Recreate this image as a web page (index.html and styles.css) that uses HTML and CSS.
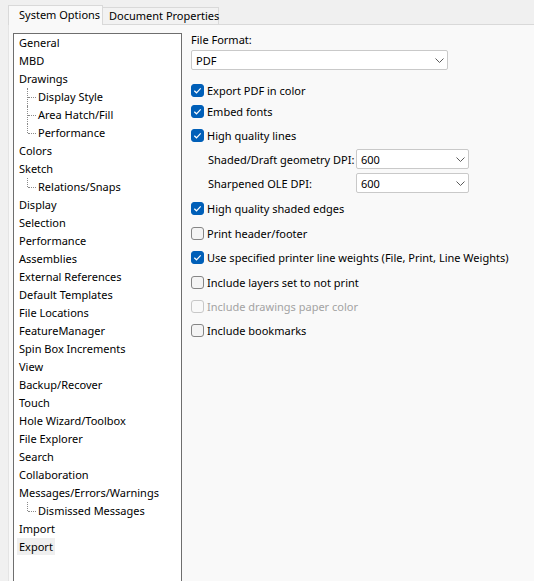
FILE: index.html
```html
<!DOCTYPE html>
<html>
<head>
<meta charset="utf-8">
<link rel="stylesheet" href="styles.css">
</head>
<body>
<div class="tabs">
  <div class="tab active">System Options</div>
  <div class="tab">Document Properties</div>
</div>
<div class="panel">
  <ul class="tree">
    <li>General</li>
    <li>MBD</li>
    <li>Drawings</li>
    <li class="child">Display Style</li>
    <li class="child">Area Hatch/Fill</li>
    <li class="child last">Performance</li>
    <li>Colors</li>
    <li>Sketch</li>
    <li class="child last">Relations/Snaps</li>
    <li>Display</li>
    <li>Selection</li>
    <li>Performance</li>
    <li>Assemblies</li>
    <li>External References</li>
    <li>Default Templates</li>
    <li>File Locations</li>
    <li>FeatureManager</li>
    <li>Spin Box Increments</li>
    <li>View</li>
    <li>Backup/Recover</li>
    <li>Touch</li>
    <li>Hole Wizard/Toolbox</li>
    <li>File Explorer</li>
    <li>Search</li>
    <li>Collaboration</li>
    <li>Messages/Errors/Warnings</li>
    <li class="child last">Dismissed Messages</li>
    <li>Import</li>
    <li><span class="sel">Export</span></li>
  </ul>
  <div class="opts">
    <div class="ff-label">File Format:</div>
    <div class="select wide"><span>PDF</span><svg class="chev" width="9" height="5" viewBox="0 0 9 5"><path d="M0.5 0.5 L4.5 4.5 L8.5 0.5" fill="none" stroke="#5a5a5a" stroke-width="1"/></svg></div>

    <div class="row first"><span class="cb on"><svg width="13" height="13" viewBox="0 0 13 13"><path d="M3.3 6.7 L5.5 8.8 L9.7 4.3" fill="none" stroke="#fff" stroke-width="1.2"/></svg></span>Export PDF in color</div>
    <div class="row tight"><span class="cb on"><svg width="13" height="13" viewBox="0 0 13 13"><path d="M3.3 6.7 L5.5 8.8 L9.7 4.3" fill="none" stroke="#fff" stroke-width="1.2"/></svg></span>Embed fonts</div>
    <div class="row"><span class="cb on"><svg width="13" height="13" viewBox="0 0 13 13"><path d="M3.3 6.7 L5.5 8.8 L9.7 4.3" fill="none" stroke="#fff" stroke-width="1.2"/></svg></span>High quality lines</div>
    <div class="sub">
      <span class="sub-label">Shaded/Draft geometry DPI:</span>
      <div class="select small"><span>600</span><svg class="chev" width="9" height="5" viewBox="0 0 9 5"><path d="M0.5 0.5 L4.5 4.5 L8.5 0.5" fill="none" stroke="#5a5a5a" stroke-width="1"/></svg></div>
    </div>
    <div class="sub">
      <span class="sub-label">Sharpened OLE DPI:</span>
      <div class="select small"><span>600</span><svg class="chev" width="9" height="5" viewBox="0 0 9 5"><path d="M0.5 0.5 L4.5 4.5 L8.5 0.5" fill="none" stroke="#5a5a5a" stroke-width="1"/></svg></div>
    </div>
    <div class="row gap1"><span class="cb on"><svg width="13" height="13" viewBox="0 0 13 13"><path d="M3.3 6.7 L5.5 8.8 L9.7 4.3" fill="none" stroke="#fff" stroke-width="1.2"/></svg></span>High quality shaded edges</div>
    <div class="row gap1"><span class="cb"></span>Print header/footer</div>
    <div class="row"><span class="cb on"><svg width="13" height="13" viewBox="0 0 13 13"><path d="M3.3 6.7 L5.5 8.8 L9.7 4.3" fill="none" stroke="#fff" stroke-width="1.2"/></svg></span>Use specified printer line weights (File, Print, Line Weights)</div>
    <div class="row gap1"><span class="cb"></span>Include layers set to not print</div>
    <div class="row disabled"><span class="cb"></span>Include drawings paper color</div>
    <div class="row"><span class="cb"></span>Include bookmarks</div>
  </div>
</div>
</body>
</html>
```
FILE: styles.css
```css
html, body {
  margin: 0;
  padding: 0;
}
body {
  background: #f0f0f0;
  font-family: "Noto Sans", "Open Sans", sans-serif;
  font-size: 11px;
  color: #000;
  height: 581px;
  overflow: hidden;
}

/* Tabs */
.tabs {
  display: flex;
  align-items: flex-end;
  height: 24px;
  padding-left: 8px;
}
.tab {
  box-sizing: border-box;
  border: 1px solid #d9d9d9;
  border-bottom: none;
  white-space: nowrap;
}
.tab.active {
  position: relative;
  width: 95px;
  height: 20px;
  margin-bottom: -1px;
  padding-left: 10px;
  line-height: 17px;
  background: #f9f9f9;
}
.tab:not(.active) {
  width: 116px;
  height: 17px;
  padding-left: 6px;
  line-height: 16px;
  background: #f2f2f2;
  border-left: none;
}

/* Panel */
.panel {
  display: flex;
  align-items: flex-start;
  margin-left: 8px;
  height: 557px;
  padding: 8px 0 0 4px;
  background: #f9f9f9;
  border-top: 1px solid #d9d9d9;
  border-left: 1px solid #e4e4e4;
}

/* Tree */
.tree {
  box-sizing: border-box;
  width: 169px;
  height: 570px;
  flex-shrink: 0;
  margin: 0;
  padding: 0 0 0 5px;
  list-style: none;
  background: #fff;
  border: 1px solid #6e6e6e;
}
.tree li {
  height: 18px;
  line-height: 18px;
  white-space: nowrap;
}
.tree li.child {
  position: relative;
  padding-left: 19px;
}
.tree li.child::before {
  content: "";
  position: absolute;
  left: 8px;
  top: 0;
  height: 18px;
  border-left: 1px dotted #8a8a8a;
}
.tree li.child.last::before {
  height: 9px;
}
.tree li.child::after {
  content: "";
  position: absolute;
  left: 9px;
  top: 9px;
  width: 8px;
  border-top: 1px dotted #8a8a8a;
}
.sel {
  display: inline-block;
  margin-left: -2px;
  padding: 0 2px;
  line-height: 17px;
  background: #efefef;
}

/* Options */
.opts {
  display: flex;
  flex-direction: column;
  margin-left: 9px;
}
.ff-label {
  line-height: 14px;
  height: 14px;
}
.select {
  box-sizing: border-box;
  display: flex;
  align-items: center;
  justify-content: space-between;
  height: 20px;
  padding: 0 3px 0 4px;
  background: #fff;
  border: 1px solid #c9c9c9;
  border-radius: 2px;
}
.select.wide {
  width: 257px;
  margin-top: 3px;
}
.select.small {
  width: 113px;
}
.chev {
  display: block;
}

.row {
  display: flex;
  align-items: center;
  height: 24px;
  gap: 3px;
  white-space: nowrap;
}
.row.first {
  margin-top: 8px;
}
.row.tight {
  margin-top: -3px;
}
.row.gap1 {
  margin-top: 1px;
}
.row.disabled {
  color: #a3a3a3;
}
.cb {
  box-sizing: border-box;
  display: block;
  width: 13px;
  height: 13px;
  flex-shrink: 0;
  border: 1px solid #858585;
  border-radius: 3px;
  background: #f4f4f4;
}
.cb svg {
  display: block;
  margin: -1px;
}
.cb.on {
  background: #005fb8;
  border-color: #005fb8;
}
.row.disabled .cb {
  border-color: #c8c8c8;
  background: #f9f9f9;
}

.sub {
  display: flex;
  align-items: center;
  height: 24px;
  padding-left: 17px;
}
.sub-label {
  width: 148px;
  white-space: nowrap;
}
```
